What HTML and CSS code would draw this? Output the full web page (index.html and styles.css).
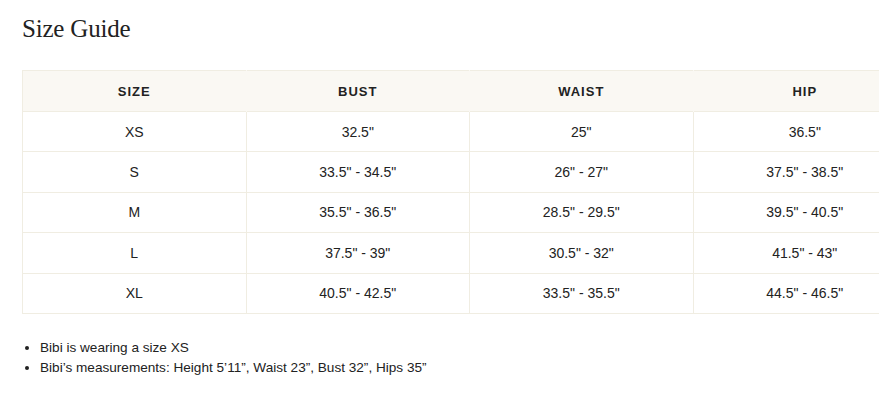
FILE: index.html
```html
<!DOCTYPE html>
<html>
<head>
<meta charset="utf-8">
<link rel="stylesheet" href="styles.css">
</head>
<body>
<div class="page">
  <h1 class="title">Size Guide</h1>
  <table class="sizes">
    <thead>
      <tr><th>SIZE</th><th>BUST</th><th>WAIST</th><th>HIP</th></tr>
    </thead>
    <tbody>
      <tr><td>XS</td><td>32.5"</td><td>25"</td><td>36.5"</td></tr>
      <tr><td>S</td><td>33.5" - 34.5"</td><td>26" - 27"</td><td>37.5" - 38.5"</td></tr>
      <tr><td>M</td><td>35.5" - 36.5"</td><td>28.5" - 29.5"</td><td>39.5" - 40.5"</td></tr>
      <tr><td>L</td><td>37.5" - 39"</td><td>30.5" - 32"</td><td>41.5" - 43"</td></tr>
      <tr><td>XL</td><td>40.5" - 42.5"</td><td>33.5" - 35.5"</td><td>44.5" - 46.5"</td></tr>
    </tbody>
  </table>
  <ul class="notes">
    <li>Bibi is wearing a size XS</li>
    <li>Bibi’s measurements: Height 5’11”, Waist 23”, Bust 32”, Hips 35”</li>
  </ul>
</div>
</body>
</html>
```
FILE: styles.css
```css
html, body {
  margin: 0;
  padding: 0;
  background: #fff;
  overflow: hidden;
}
.page {
  padding: 14px 0 0 22px;
  color: #222;
  font-family: "Liberation Sans", Arial, sans-serif;
}
.title {
  margin: 0 0 26px 0;
  font-family: "Liberation Serif", "Times New Roman", serif;
  font-weight: 400;
  font-size: 25px;
  line-height: 30px;
  color: #222;
  letter-spacing: -0.2px;
}
.sizes {
  border-collapse: collapse;
  width: 895px;
  table-layout: fixed;
  font-size: 14px;
}
.sizes th {
  background: #faf8f3;
  height: 40px;
  padding: 0;
  font-weight: 700;
  letter-spacing: 1px;
  font-size: 13px;
  color: #222;
  border-top: 1px solid #f0ede2;
  border-left: 1px solid #f0ede2;
  border-right: 1px solid #faf8f3;
}
.sizes th:first-child {
  border-left: 1px solid #f0ede2;
}
.sizes th + th {
  border-left-color: #faf8f3;
}
.sizes td {
  height: 39.4px;
  padding: 0;
  text-align: center;
  color: #222;
  border: 1px solid #f0ede2;
}
.notes {
  margin: 24px 0 0 0;
  padding: 0 0 0 18px;
  font-size: 13.6px;
  line-height: 20px;
  color: #222;
}
```
